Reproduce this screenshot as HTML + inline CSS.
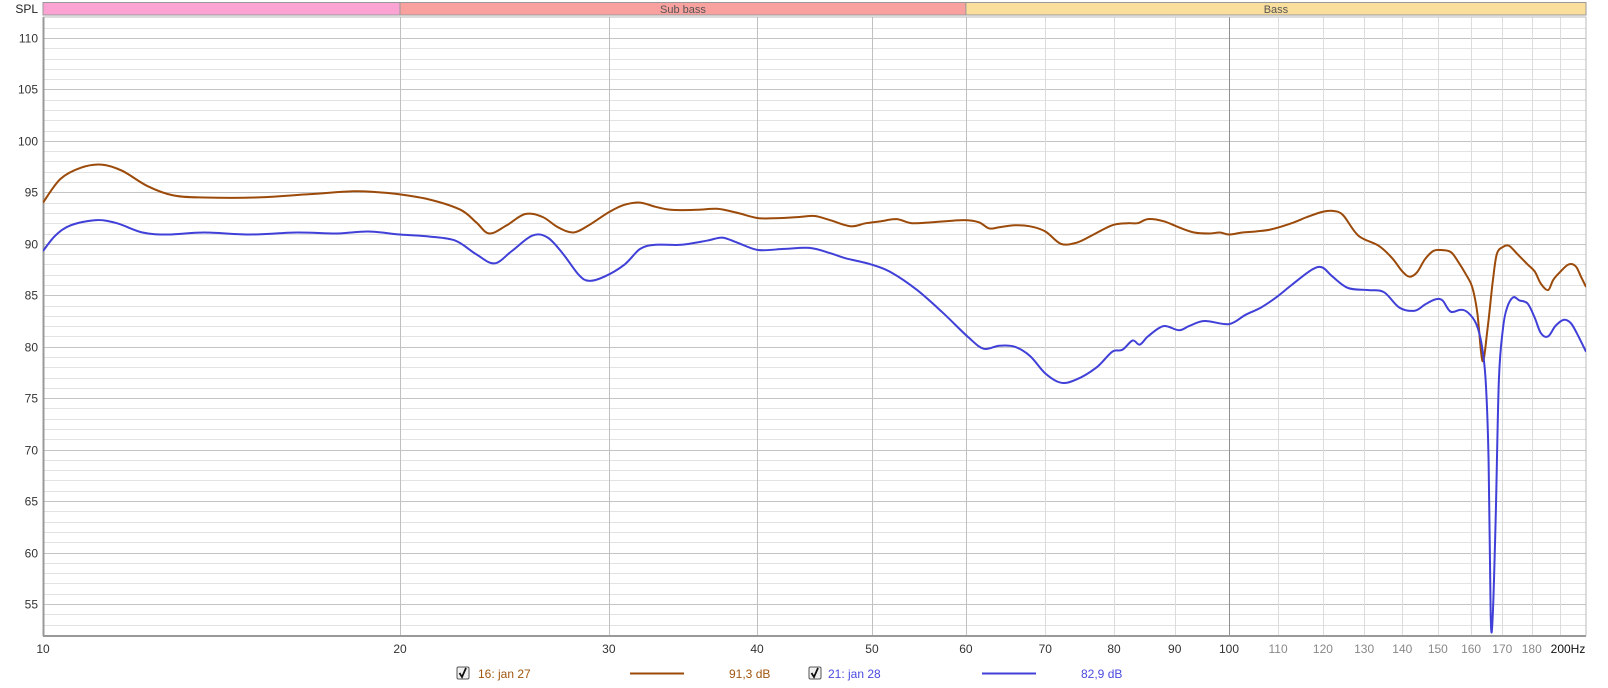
<!DOCTYPE html>
<html><head><meta charset="utf-8"><style>
html,body{margin:0;padding:0;background:#fff;width:1608px;height:688px;overflow:hidden}
svg{display:block;font-family:"Liberation Sans",sans-serif}
</style></head><body>
<svg id="s" width="1608" height="688" viewBox="0 0 1608 688" xmlns="http://www.w3.org/2000/svg"></svg>
<script>
const S=document.getElementById('s');
let h='';
const L=43,R=1586,T=17,B=636;
const X=f=>L+1186*Math.log10(f/10);
const Y=d=>38+(110-d)*10.29;
h+=`<rect x="${L}" y="3" width="${X(20)-L}" height="12" fill="#fba3d2"/>`;
h+=`<rect x="${X(20)}" y="3" width="${X(60)-X(20)}" height="12" fill="#f9a19f"/>`;
h+=`<rect x="${X(60)}" y="3" width="${R-X(60)}" height="12" fill="#fade9c"/>`;
h+=`<rect x="${L}" y="2.5" width="${R-L}" height="12.5" fill="none" stroke="#999" stroke-width="1"/>`;
h+=`<line x1="${X(20)}" y1="3" x2="${X(20)}" y2="15" stroke="#999"/><line x1="${X(60)}" y1="3" x2="${X(60)}" y2="15" stroke="#999"/>`;
h+=`<text x="${(X(20)+X(60))/2}" y="13" font-size="11" fill="#555" text-anchor="middle">Sub bass</text>`;
h+=`<text x="${(X(60)+R)/2}" y="13" font-size="11" fill="#555" text-anchor="middle">Bass</text>`;
h+=`<text x="38" y="13" font-size="12" fill="#222" text-anchor="end">SPL</text>`;
for(let d=52;d<=111;d++){const y=Math.round(Y(d))+0.5;const maj=d%5==0;
 h+=`<line x1="${L}" x2="${R}" y1="${y}" y2="${y}" stroke="${maj?'#c4c4c4':'#e2e2e2'}" stroke-width="1"/>`;
 if(maj&&d>=55&&d<=110)h+=`<text x="38" y="${y+4}" font-size="12" fill="#333" text-anchor="end">${d}</text>`;}
const fs=[20,30,40,50,60,70,80,90,100,110,120,130,140,150,160,170,180,190];
for(const f of fs){const x=Math.round(X(f))+0.5;
 let c=f<=60?'#c0c0c0':(f==100?'#909090':'#dcdcdc');
 h+=`<line x1="${x}" x2="${x}" y1="${T}" y2="${B}" stroke="${c}"/>`;}
const lab=[10,20,30,40,50,60,70,80,90,100,110,120,130,140,150,160,170,180];
for(const f of lab){const x=X(f);
 h+=`<text x="${x}" y="653" font-size="12" fill="${f>100?'#888':'#333'}" text-anchor="middle">${f}</text>`;}
h+=`<text x="1568" y="653" font-size="12" fill="#111" text-anchor="middle">200Hz</text>`;
h+=`<line x1="${L+0.5}" y1="${T}" x2="${L+0.5}" y2="${B}" stroke="#999" stroke-width="2"/>`;
h+=`<line x1="${L}" y1="${B}" x2="${R}" y2="${B}" stroke="#999" stroke-width="2"/>`;
h+=`<line x1="${R}" y1="${T}" x2="${R}" y2="${B}" stroke="#bbb" stroke-width="1"/>`;
h+=`<line x1="${L}" y1="${T}" x2="${R}" y2="${T}" stroke="#bbb" stroke-width="1"/>`;
const tx=p=>[43+(p[0]-43)*1.026,38+(p[1]-38)*1.029];
const brown=[[43,198],[60,175],[80,164],[100,161],[120,167],[145,182],[170,191],[200,193],[250,193],[300,190],[345,187],[370,188],[391,190],[420,195],[450,205],[465,217],[478,228],[495,220],[513,209],[530,212],[545,222],[560,227],[575,220],[595,207],[610,200],[625,198],[640,202],[655,205],[680,205],[700,204],[720,208],[740,213],[760,213],[780,212],[795,211],[810,215],[830,221],[845,218],[860,216],[875,214],[890,218],[910,217],[940,215],[955,217],[965,223],[975,222],[990,220],[1005,221],[1020,226],[1035,238],[1050,237],[1065,230],[1085,220],[1100,218],[1110,218],[1120,214],[1135,216],[1150,222],[1165,227],[1180,228],[1190,227],[1199,229],[1212,227],[1225,226],[1240,224],[1260,218],[1275,212],[1290,207],[1300,206],[1310,210],[1325,230],[1345,240],[1358,252],[1368,265],[1375,270],[1382,266],[1390,253],[1398,245],[1405,244],[1415,246],[1422,255],[1430,268],[1436,280],[1441,305],[1446,352],[1451,320],[1456,275],[1460,248],[1466,241],[1472,240],[1480,248],[1490,258],[1497,265],[1503,277],[1510,283],[1515,273],[1522,265],[1530,258],[1537,260],[1542,270],[1547,280]];
const blue=[[43,245],[55,230],[70,220],[95,215],[115,218],[140,227],[165,229],[200,227],[245,229],[290,227],[330,228],[360,226],[391,229],[420,231],[445,235],[465,248],[483,257],[500,245],[520,230],[535,232],[550,248],[565,268],[575,274],[590,270],[610,258],[625,243],[640,239],[665,239],[690,235],[705,232],[720,237],[740,244],[765,243],[790,242],[810,247],[825,252],[850,258],[870,266],[895,283],[920,305],[945,329],[960,340],[975,337],[990,338],[1005,347],[1020,364],[1035,373],[1050,370],[1070,358],[1085,343],[1095,341],[1105,332],[1112,336],[1120,328],[1135,318],[1150,322],[1160,318],[1175,313],[1199,316],[1215,307],[1230,300],[1245,290],[1260,278],[1280,263],[1290,261],[1300,270],[1315,281],[1335,283],[1350,285],[1365,300],[1380,303],[1390,297],[1400,292],[1407,293],[1415,304],[1425,302],[1432,305],[1440,316],[1445,335],[1449,370],[1452,450],[1454,600],[1456,600],[1459,500],[1462,370],[1466,320],[1470,300],[1476,290],[1482,293],[1490,296],[1497,310],[1503,325],[1510,328],[1517,318],[1525,312],[1532,315],[1538,325],[1547,343]];
function path(pts){
 const p=pts.map(tx);let d=`M${p[0][0]},${p[0][1]}`;
 for(let i=0;i<p.length-1;i++){const p0=p[i-1]||p[i],p1=p[i],p2=p[i+1],p3=p[i+2]||p2;
  const c1=[p1[0]+(p2[0]-p0[0])/6,p1[1]+(p2[1]-p0[1])/6],c2=[p2[0]-(p3[0]-p1[0])/6,p2[1]-(p3[1]-p1[1])/6];
  d+=`C${c1[0].toFixed(1)},${c1[1].toFixed(1)} ${c2[0].toFixed(1)},${c2[1].toFixed(1)} ${p2[0].toFixed(1)},${p2[1].toFixed(1)}`;}
 return d;}
h+=`<clipPath id="c"><rect x="${L}" y="${T}" width="${R-L}" height="${B-T}"/></clipPath>`;
h+=`<g clip-path="url(#c)" fill="none" stroke-width="2" stroke-linejoin="round">`;
h+=`<path d="${path(brown)}" stroke="#9b4a0a"/>`;
h+=`<path d="${path(blue)}" stroke="#4040d8"/></g>`;
function cb(x){return `<rect x="${x-6}" y="667" width="12" height="12" fill="#f0f0f0" stroke="#555" rx="1.5"/><path d="M${x-3.5},673 l2.5,4 l4,-9" stroke="#111" stroke-width="1.8" fill="none"/>`;}
h+=cb(463)+`<text x="478" y="678" font-size="12" fill="#a0560f">16: jan 27</text>`;
h+=`<line x1="630" x2="684" y1="673.5" y2="673.5" stroke="#9b4a0a" stroke-width="2"/>`;
h+=`<text x="729" y="678" font-size="12" fill="#a0560f">91,3 dB</text>`;
h+=cb(815)+`<text x="828" y="678" font-size="12" fill="#4a4ae0">21: jan 28</text>`;
h+=`<line x1="982" x2="1036" y1="673.5" y2="673.5" stroke="#4040d8" stroke-width="2"/>`;
h+=`<text x="1081" y="678" font-size="12" fill="#4a4ae0">82,9 dB</text>`;
S.innerHTML=h;
</script>
</body></html>
